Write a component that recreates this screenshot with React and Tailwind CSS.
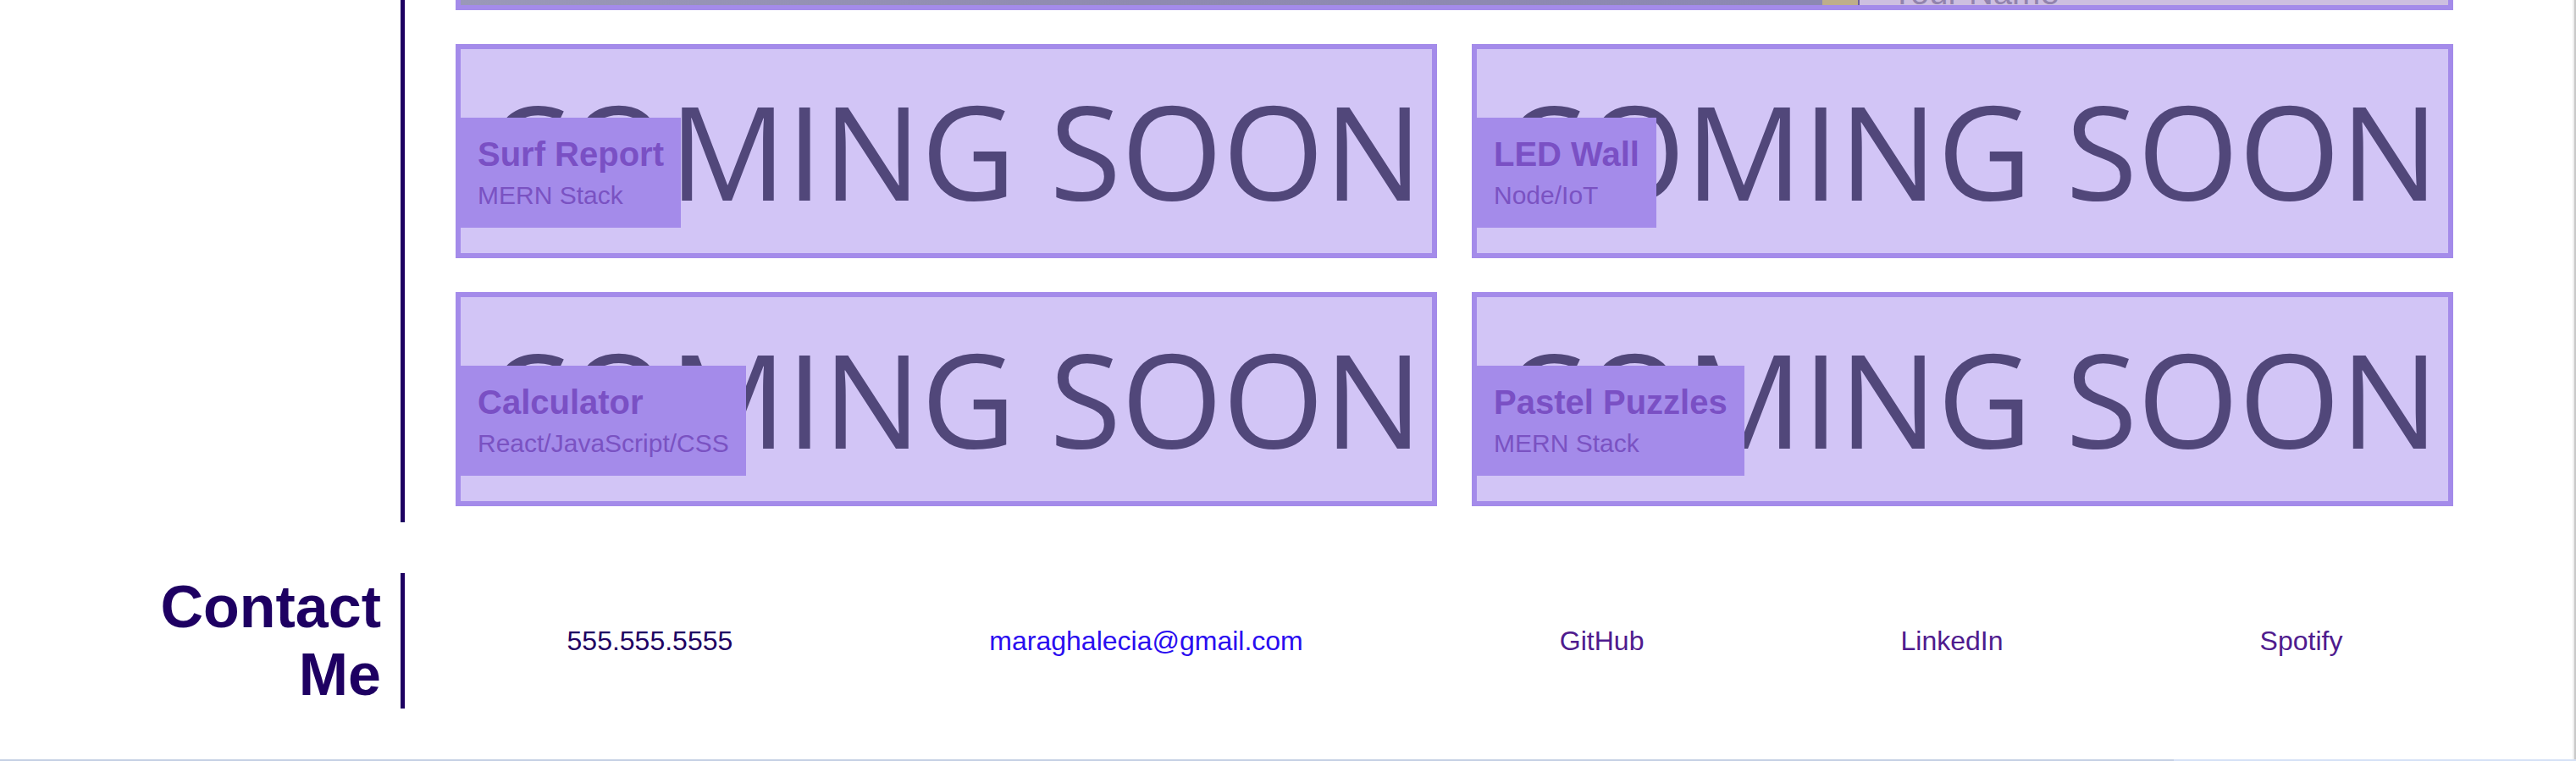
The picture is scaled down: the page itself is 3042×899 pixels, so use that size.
const projects = [
  { title: "Surf Report", stack: "MERN Stack" },
  { title: "LED Wall", stack: "Node/IoT" },
  { title: "Calculator", stack: "React/JavaScript/CSS" },
  { title: "Pastel Puzzles", stack: "MERN Stack" },
];

const contacts = [
  { label: "555.555.5555", color: "text-[#1e0062]" },
  { label: "maraghalecia@gmail.com", color: "text-[#2a0cf0]" },
  { label: "GitHub", color: "text-[#4f1b8e]" },
  { label: "LinkedIn", color: "text-[#4f1b8e]" },
  { label: "Spotify", color: "text-[#4f1b8e]" },
];

function ProjectCard({ title, stack }) {
  return (
    <div className="relative h-[253px] border-[6px] border-[#a48bea] bg-[#d2c5f6] overflow-hidden">
      <div className="h-full flex items-center justify-center pl-[18px] -mt-[2px]">
        <span className="font-['Open_Sans',sans-serif] text-[154px] leading-none text-[#51477a] whitespace-nowrap">
          COMING SOON
        </span>
      </div>
      <div className="absolute left-0 bottom-[30px] bg-[#a48bea] px-5 pt-5 pb-[21px]">
        <h3 className="text-[40px] leading-[46px] font-bold text-[#7a50c4] whitespace-nowrap">{title}</h3>
        <p className="mt-2 text-[30px] leading-[35px] text-[#7a52c2] whitespace-nowrap">{stack}</p>
      </div>
    </div>
  );
}

export default function App() {
  return (
    <div className="h-[899px] w-full flex flex-col overflow-hidden bg-white font-['Liberation_Sans',Arial,sans-serif]">
      <div className="flex-1 flex min-h-0">
        <main className="flex-1 flex flex-col">
          {/* projects */}
          <section className="flex">
            <div className="w-[478px] shrink-0 border-r-[5px] border-[#1e0062]" />
            <div className="flex-1 pl-[60px] pr-[141px] pb-[19px]">
              <div className="grid grid-cols-2 gap-x-[41px] gap-y-[40px]">
                <div className="col-span-2 h-[12px] border-x-[6px] border-b-[6px] border-[#a48bea] flex overflow-hidden">
                  <div className="w-[1608px] bg-gradient-to-r from-[#9a98b8] via-[#8f8ab0] to-[#8c88b2]" />
                  <div className="w-[42px] bg-[#beae8a]" />
                  <div className="w-[2px] bg-[#6d5f9a]" />
                  <div className="flex-1 bg-[#cdbfe0] pl-[37px]">
                    <div className="-mt-[29px] text-[40px] leading-none text-[#9283ad] whitespace-nowrap">
                      Your Name
                    </div>
                  </div>
                </div>
                {projects.map((p) => (
                  <ProjectCard key={p.title} {...p} />
                ))}
              </div>
            </div>
          </section>

          {/* contact */}
          <section className="flex items-center mt-[60px]">
            <h2 className="w-[478px] shrink-0 border-r-[5px] border-[#1e0062] pr-[23px] text-right text-[70px] leading-[80px] font-bold text-[#1e0062]">
              Contact
              <br />
              Me
            </h2>
            <div className="ml-[40px] w-[2400px] flex justify-around text-[32px] leading-[37px]">
              {contacts.map((c) => (
                <a key={c.label} className={`${c.color} whitespace-nowrap`}>
                  {c.label}
                </a>
              ))}
            </div>
          </section>
        </main>
        <div className="w-[4px] flex">
          <div className="w-[2px] bg-[#eeeeee]" />
          <div className="w-[2px] bg-[#c9c9c9]" />
        </div>
      </div>
      <div className="h-[2px] flex">
        <div className="w-[2567px] bg-[#c5d0e4]" />
        <div className="flex-1 bg-[#d5e1f6]" />
      </div>
    </div>
  );
}
